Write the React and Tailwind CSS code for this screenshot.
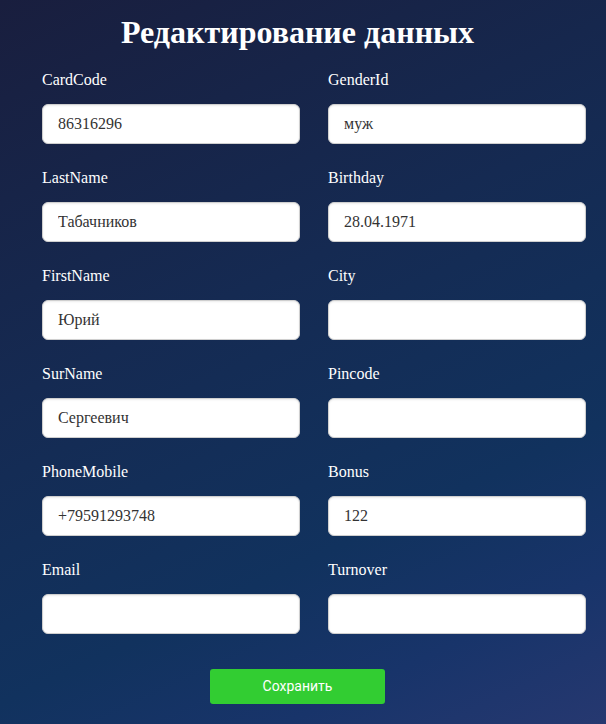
import React from "react";

const fields = [
  ["CardCode", "86316296", "GenderId", "муж"],
  ["LastName", "Табачников", "Birthday", "28.04.1971"],
  ["FirstName", "Юрий", "City", ""],
  ["SurName", "Сергеевич", "Pincode", ""],
  ["PhoneMobile", "+79591293748", "Bonus", "122"],
  ["Email", "", "Turnover", ""],
];

function Field({ label, value }) {
  return (
    <div className="flex flex-col">
      <label className="h-[18px] text-[16px] leading-[18px] text-white">{label}</label>
      <input
        readOnly
        value={value}
        className="mt-[15px] h-[40px] w-[258px] rounded-[6px] border border-[#cfcfcf] bg-white px-[15px] text-[16px] text-[#333] shadow-[inset_0_1px_2px_rgba(0,0,0,0.08)] outline-none"
        style={{ fontFamily: '"Liberation Serif", "Times New Roman", serif' }}
      />
    </div>
  );
}

export default function App() {
  return (
    <div
      className="h-[724px] w-[606px] overflow-hidden bg-[linear-gradient(155deg,#191e3e_0%,#152a52_40%,#11325e_70%,#18346a_85%,#263870_100%)]"
      style={{ fontFamily: '"Liberation Serif", "Times New Roman", serif' }}
    >
      <div className="flex w-[595px] flex-col items-center">
        <h1 className="mt-[12px] h-[40px] text-[32px] font-bold leading-[40px] text-white">
          Редактирование данных
        </h1>
        <div className="mt-[19px] grid w-full grid-cols-[258px_258px] gap-x-[28px] gap-y-[25px] pl-[42px]">
          {fields.map(([l1, v1, l2, v2]) => (
            <React.Fragment key={l1}>
              <Field label={l1} value={v1} />
              <Field label={l2} value={v2} />
            </React.Fragment>
          ))}
        </div>
        <button
          className="mt-[35px] h-[35px] w-[175px] rounded-[3px] bg-[#32cd32] text-[14px] text-white"
          style={{ fontFamily: 'Roboto, "Liberation Sans", sans-serif' }}
        >
          Сохранить
        </button>
      </div>
    </div>
  );
}
